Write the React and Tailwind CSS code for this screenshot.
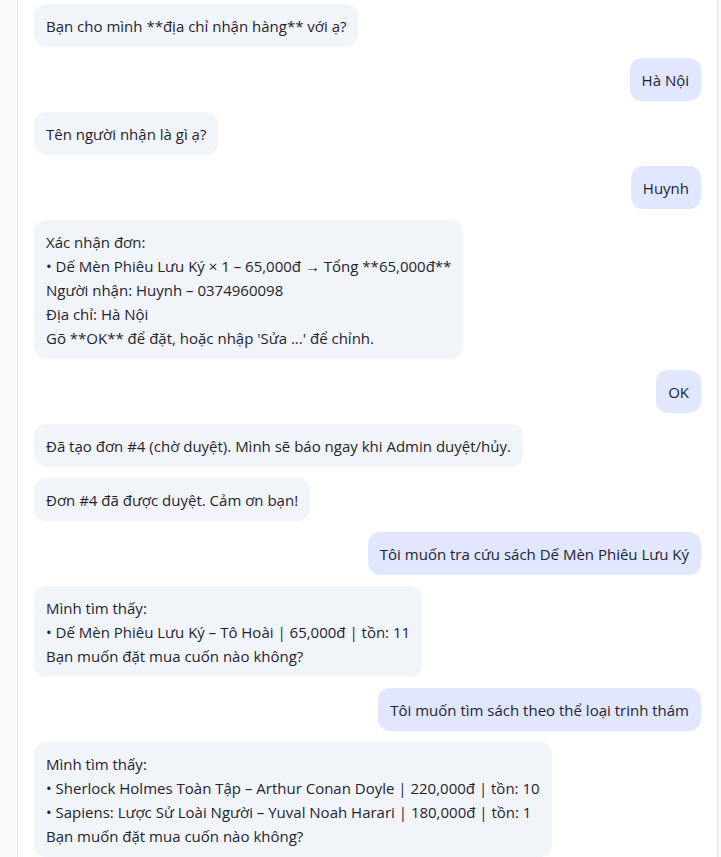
const messages = [
  { from: 'bot', text: 'Bạn cho mình **địa chỉ nhận hàng** với ạ?' },
  { from: 'user', text: 'Hà Nội' },
  { from: 'bot', text: 'Tên người nhận là gì ạ?' },
  { from: 'user', text: 'Huynh' },
  {
    from: 'bot',
    text: "Xác nhận đơn:\n• Dế Mèn Phiêu Lưu Ký × 1 – 65,000đ → Tổng **65,000đ**\nNgười nhận: Huynh – 0374960098\nĐịa chỉ: Hà Nội\nGõ **OK** để đặt, hoặc nhập 'Sửa ...' để chỉnh.",
  },
  { from: 'user', text: 'OK' },
  { from: 'bot', text: 'Đã tạo đơn #4 (chờ duyệt). Mình sẽ báo ngay khi Admin duyệt/hủy.' },
  { from: 'bot', text: 'Đơn #4 đã được duyệt. Cảm ơn bạn!' },
  { from: 'user', text: 'Tôi muốn tra cứu sách Dế Mèn Phiêu Lưu Ký' },
  {
    from: 'bot',
    text: 'Mình tìm thấy:\n• Dế Mèn Phiêu Lưu Ký – Tô Hoài | 65,000đ | tồn: 11\nBạn muốn đặt mua cuốn nào không?',
  },
  { from: 'user', text: 'Tôi muốn tìm sách theo thể loại trinh thám' },
  {
    from: 'bot',
    text: 'Mình tìm thấy:\n• Sherlock Holmes Toàn Tập – Arthur Conan Doyle | 220,000đ | tồn: 10\n• Sapiens: Lược Sử Loài Người – Yuval Noah Harari | 180,000đ | tồn: 1\nBạn muốn đặt mua cuốn nào không?',
  },
];

export default function App() {
  return (
    <div
      className="h-[857px] w-[721px] overflow-hidden bg-[#f8f9fb] pl-[17px] pr-[3px] text-[#1f2430]"
      style={{ fontFamily: '"Open Sans", "Noto Sans", sans-serif' }}
    >
      {/* Chat window */}
      <div className="h-full border-x border-[#e6e8ec] bg-white px-4 pt-1">
        <div className="flex flex-col gap-[11px]">
          {messages.map((m, i) => (
            <div key={i} className={`flex ${m.from === 'user' ? 'justify-end' : 'justify-start'}`}>
              <div
                className={`max-w-[85%] whitespace-pre-line rounded-xl px-3 pt-[10px] pb-[9px] text-[15px] leading-6 ${
                  m.from === 'user' ? 'bg-[#e0e7ff]' : 'bg-[#f1f4f9]'
                }`}
              >
                {m.text}
              </div>
            </div>
          ))}
        </div>
      </div>
    </div>
  );
}
